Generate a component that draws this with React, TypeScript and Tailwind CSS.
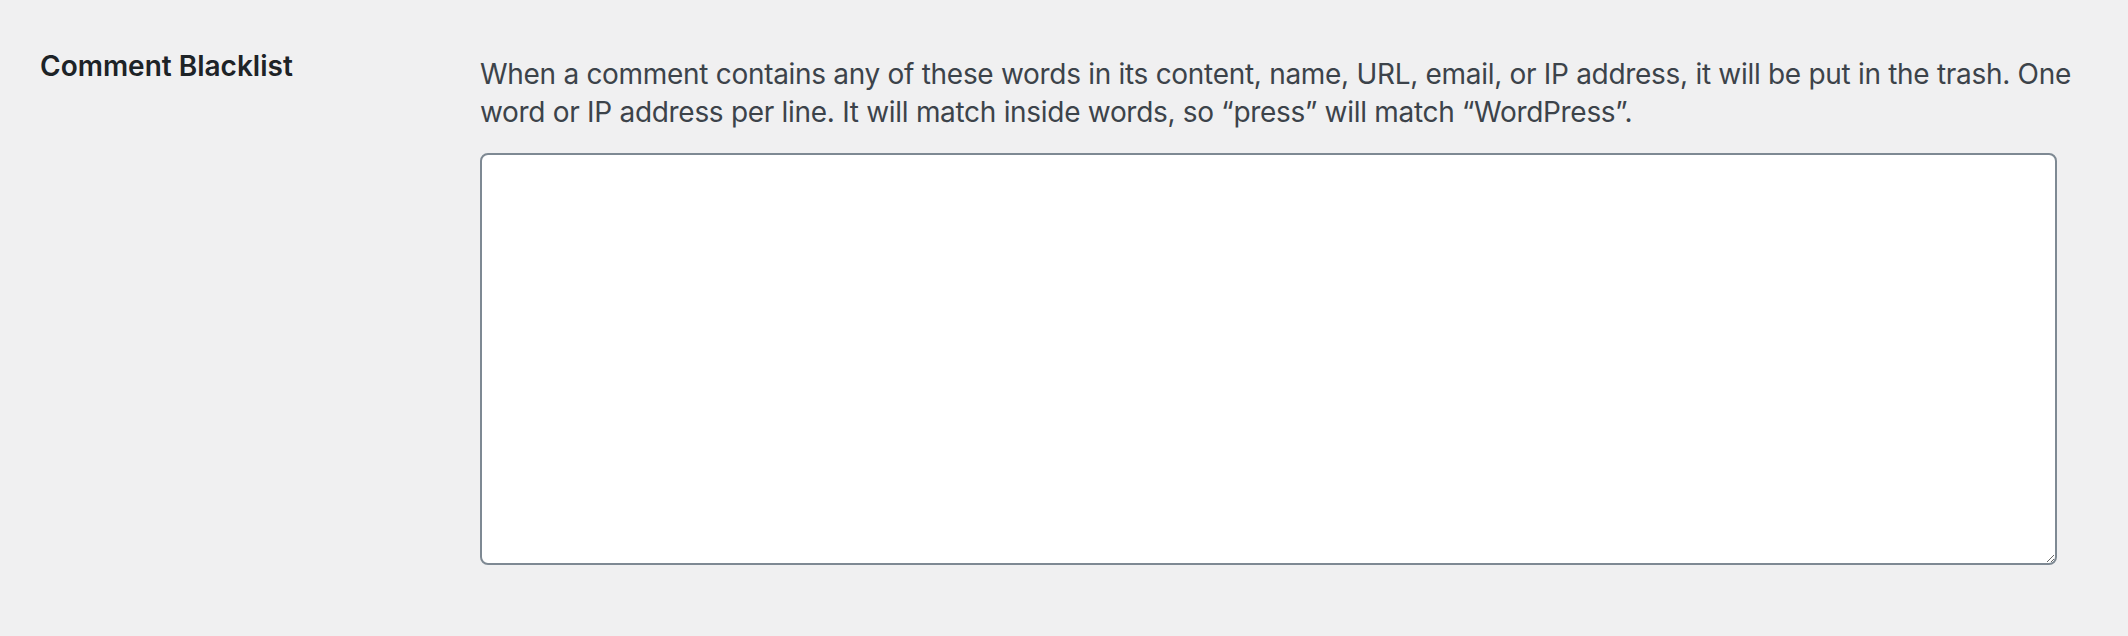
export default function App() {
  return (
    <div className="min-h-[636px] w-full bg-[#f0f0f1] pl-[40px] pt-[40px] font-['Inter','Noto_Sans',sans-serif]">
      <div className="flex">
        <div className="w-[440px] shrink-0 pr-[20px] pt-[8px]">
          <span className="text-[28px] leading-[36px] font-semibold text-[#1d2327]">Comment Blacklist</span>
        </div>
        <div className="w-[1593px]">
          <p className="mt-[15px] whitespace-nowrap text-[28px] leading-[38px] tracking-[-0.3px] text-[#3c434a]">
            When a comment contains any of these words in its content, name, URL, email, or IP address, it will be put in the trash. One
            <br />
            word or IP address per line. It will match inside words, so “press” will match “WordPress”.
          </p>
          <textarea
            aria-label="Comment Blacklist"
            className="mt-[22px] block h-[412px] w-[99%] rounded-[8px] border-2 border-[#7e8993] bg-white p-[12px] text-[28px] text-[#2c3338] outline-none"
          />
        </div>
      </div>
    </div>
  )
}
